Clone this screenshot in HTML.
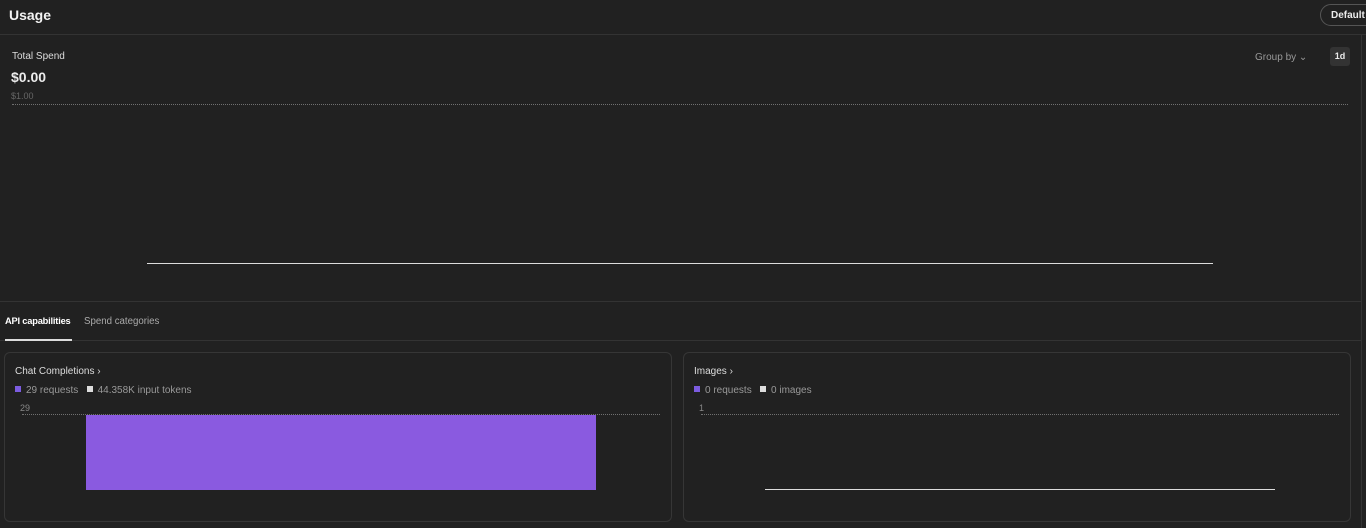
<!DOCTYPE html>
<html><head><style>
body{margin:0;width:1366px;height:528px;background:#212121;font-family:"Liberation Sans",sans-serif;color:#ececec;position:relative;overflow:hidden}
.a{position:absolute}
.dot{position:absolute;border-top:1px dotted #707070;height:0}
.card{position:absolute;border:1px solid #363636;border-radius:6px;top:352px;height:168px}
.sq{display:inline-block;width:6px;height:6px;margin-right:5px;vertical-align:1px}
</style></head><body>
<div class="a" style="left:9px;top:7px;font-size:14px;font-weight:bold;color:#f3f3f3">Usage</div>
<div class="a" style="left:1320px;top:4px;width:60px;height:22px;border:1px solid #555;border-radius:12px;font-size:10px;font-weight:bold;line-height:22px;padding-left:10px;box-sizing:border-box">Default p</div>
<div class="a" style="left:0;top:34px;width:1366px;height:1px;background:#333"></div>
<div class="a" style="left:1361px;top:35px;width:1px;height:493px;background:#333"></div>
<div class="a" style="left:12px;top:51px;font-size:10px;color:#ddd">Total Spend</div>
<div class="a" style="left:11px;top:69px;font-size:14px;font-weight:bold">$0.00</div>
<div class="a" style="left:11px;top:91px;font-size:9px;color:#666">$1.00</div>
<div class="dot" style="left:12px;top:104px;width:1336px"></div>
<div class="a" style="left:1255px;top:52px;font-size:10px;color:#999">Group by &#8964;</div>
<div class="a" style="left:1330px;top:47px;width:20px;height:19px;background:#333;border-radius:3px;font-size:9px;font-weight:bold;text-align:center;line-height:19px">1d</div>
<div class="a" style="left:147px;top:263px;width:1066px;height:1px;background:#ddd"></div>
<div class="a" style="left:0;top:301px;width:1361px;height:1px;background:#333"></div>
<div class="a" style="left:5px;top:316px;font-size:9.3px;font-weight:bold;color:#fff;letter-spacing:-0.2px">API capabilities</div>
<div class="a" style="left:84px;top:316px;font-size:9.7px;color:#aaa">Spend categories</div>
<div class="a" style="left:0;top:340px;width:1361px;height:1px;background:#333"></div>
<div class="a" style="left:5px;top:339px;width:67px;height:2px;background:#ddd"></div>
<div class="card" style="left:4px;width:666px"></div>
<div class="card" style="left:683px;width:666px"></div>
<div class="a" style="left:15px;top:366px;font-size:10px;color:#ddd">Chat Completions &#x203A;</div>
<div class="a" style="left:15px;top:385px;font-size:10px;color:#999"><span class="sq" style="background:#7c5ce0"></span>29 requests &nbsp;&nbsp;<span class="sq" style="background:#ddd"></span>44.358K input tokens</div>
<div class="a" style="left:20px;top:403px;font-size:9px;color:#888">29</div>
<div class="dot" style="left:22px;top:414px;width:638px"></div>
<div class="a" style="left:86px;top:415px;width:510px;height:75px;background:#8a5ae0"></div>
<div class="a" style="left:694px;top:366px;font-size:10px;color:#ddd">Images &#x203A;</div>
<div class="a" style="left:694px;top:385px;font-size:10px;color:#999"><span class="sq" style="background:#7c5ce0"></span>0 requests &nbsp;&nbsp;<span class="sq" style="background:#ddd"></span>0 images</div>
<div class="a" style="left:699px;top:403px;font-size:9px;color:#888">1</div>
<div class="dot" style="left:701px;top:414px;width:638px"></div>
<div class="a" style="left:765px;top:489px;width:510px;height:1px;background:#ddd"></div>
</body></html>
